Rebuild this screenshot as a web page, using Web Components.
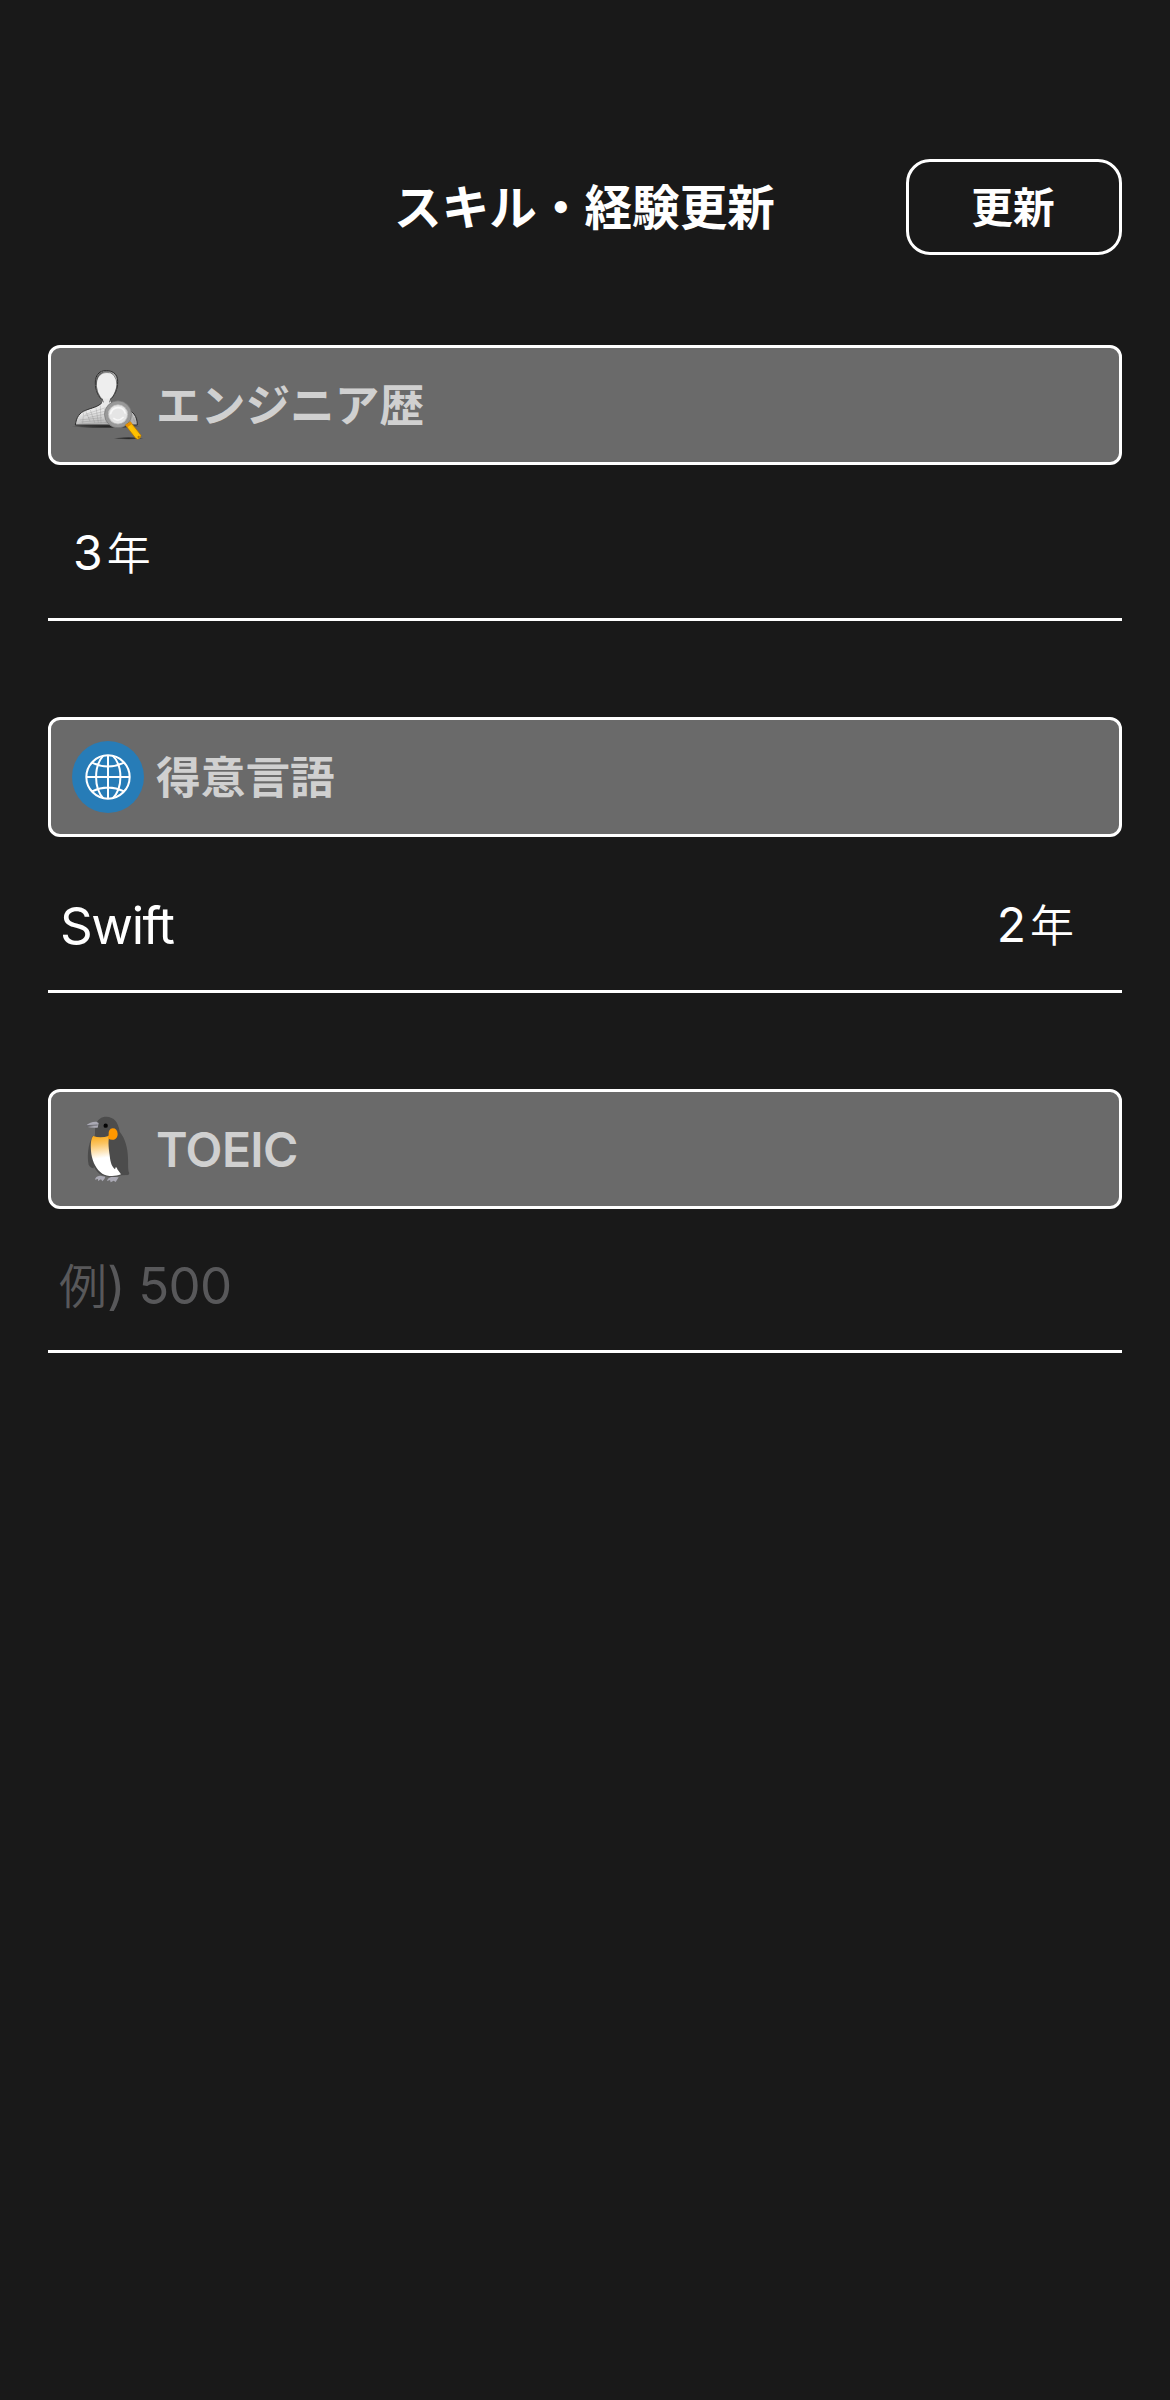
<!DOCTYPE html>
<html lang="ja">
<head>
<meta charset="utf-8">
<title>スキル・経験更新</title>
<style>
html, body { margin: 0; background: #191919; }
body { width: 1170px; height: 2400px; overflow: hidden; font-family: Inter, "Noto Sans CJK JP", sans-serif; color: #fff; }
.jp { font: 350 48px/1 "Noto Sans CJK JP", sans-serif; letter-spacing: 0; margin: 0 0 2px -1px; }
</style>
</head>
<body>
<skill-page>
  <nav-bar slot="nav" heading="スキル・経験更新"><outline-button slot="action">更新</outline-button></nav-bar>
  <skill-section label="エンジニア歴" icon="user">
    <field-row kind="years"><value-text num="3" unit="年"></value-text></field-row>
  </skill-section>
  <skill-section label="得意言語" icon="globe">
    <field-row kind="language"><span>Swift</span><value-text slot="end" num="2" unit="年"></value-text></field-row>
  </skill-section>
  <skill-section label="TOEIC" icon="penguin" latin>
    <field-row kind="score"><span class="jp">例</span><span>) 500</span></field-row>
  </skill-section>
</skill-page>

<script>
const ICONS = {
  user: `<svg viewBox="36 27 216 216">
    <defs><linearGradient id="b" x1="0" y1="0" x2=".35" y2="1"><stop offset="0" stop-color="#f0f0f0"/><stop offset=".5" stop-color="#e5e5e5"/><stop offset="1" stop-color="#b2b2b2"/></linearGradient>
    <linearGradient id="h" x1="0" y1="1" x2="1" y2="0"><stop offset="0" stop-color="#f2a000"/><stop offset=".5" stop-color="#ffc400"/><stop offset="1" stop-color="#e79000"/></linearGradient>
    <radialGradient id="s"><stop offset="0" stop-color="#111" stop-opacity=".8"/><stop offset=".7" stop-color="#1c1c1c" stop-opacity=".5"/><stop offset="1" stop-color="#333" stop-opacity="0"/></radialGradient></defs>
    <ellipse cx="138" cy="199" rx="104" ry="6" fill="url(#s)"/>
    <ellipse cx="206" cy="235" rx="46" ry="4" fill="url(#s)"/>
    <path d="M46 195C49 172 58 158 77 151C95 143 114 142 128 126L151 125C169 139 207 144 222 162C229 171 232 182 232 195Z" fill="url(#b)" stroke="#2c2c2c" stroke-width="3"/>
    <path d="M59 180L126 173M62 186L133 180M58 192L142 187M76 163L137 143M72 168L134 154M84 173L136 162M71 157L68 190M77 153L90 184M91 150L104 188M108 143L115 188M121 137L123 190M134 147L139 190M213 158L225 188M218 162L209 191" stroke="#777" stroke-width="1.5" opacity=".5" fill="none"/>
    <path d="M139 32C119 31 107 44 106 66C105 91 117 119 138 126C159 118 174 91 173 64C173 43 160 32 139 32Z" fill="#a0a0a0" stroke="#2b2b2b" stroke-width="3" stroke-dasharray="15 1"/>
    <path d="M141 39C122 40 112 51 111 70C109 92 119 114 139 125C159 114 170 91 170 67C170 48 160 39 141 39Z" fill="#eee"/>
    <path d="M110 57Q120 30 148 36M108 76Q110 45 128 38M112 94Q101 55 122 37M168 92Q178 54 151 37M119 109L109 90M160 109L171 83" stroke="#505050" stroke-width="2" fill="none"/>
    <path d="M128 116H150L155 132Q140 138 125 132Z" fill="#e8e8e8"/>
    <path d="M126 116L130 127M152 116L149 127" stroke="#555" stroke-width="3" fill="none"/>
    <circle cx="174" cy="163" r="35" fill="#e2e2e2" stroke="#999" stroke-width="11"/>
    <circle cx="174" cy="163" r="40.5" fill="none" stroke="#747474" stroke-width="2"/>
    <circle cx="174" cy="163" r="29" fill="#e5e5e5" stroke="#aaa" stroke-width="2"/>
    <path d="M151 163Q156 143 174 143T196 161M160 174Q174 188 191 171" fill="none" stroke="#f7f7f7" stroke-width="5"/>
    <path d="M196 195L211 185L243 226Q243 236 233 238L227 235Z" fill="url(#h)" stroke="#ad7100" stroke-width="2"/>
    <path d="M197 195L211 186L216 192L202 202Z" fill="#e98d00"/><circle cx="236" cy="231" r="3.5" fill="#b77a00"/>
  </svg>`,
  globe: `<svg viewBox="96 93 216 216"><circle cx="204" cy="201" r="108" fill="#277cb7"/>
    <g fill="none" stroke="#fff" stroke-width="6"><circle cx="204" cy="201" r="65"/>
    <path d="M204 136V266M139 201H269M190 137C161 168 161 234 190 265M218 137C249 168 249 234 218 265M156 158Q204 181 252 158M156 244Q204 221 252 244"/></g></svg>`,
  penguin: `<svg viewBox="6 22 216 216"><defs><linearGradient id="p" gradientUnits="userSpaceOnUse" x1="90" y1="92" x2="98" y2="157"><stop offset="0" stop-color="#fbad22"/><stop offset=".35" stop-color="#fbc564"/><stop offset="1" stop-color="#fff"/></linearGradient></defs>
    <path d="M90 210Q76 212 75 222L84 220L84 226L93 221L97 227Q104 222 106 213ZM126 213Q113 216 111 226L120 223L122 230L131 225L137 229L146 215Z" fill="#aaa9b4"/>
    <path d="M68 92C53 117 51 157 56 177Q61 187 71 188L80 100Z" fill="#4b4b4b"/>
    <path d="M78 57C83 40 94 33 109 33C132 34 145 49 149 78C166 99 173 126 174 158C175 177 173 194 178 203L175 208L154 209C136 216 107 215 89 205C71 191 61 162 61 130C61 112 64 99 72 93C78 89 72 74 78 57Z" fill="#4c4c4c"/>
    <path d="M70 91Q91 99 118 90C113 111 117 132 119 149C121 171 126 184 135 191L137 185Q141 184 142 191L153 206C137 213 111 213 97 204C80 193 68 170 64 145C61 119 62 98 70 91Z" fill="url(#p)"/>
    <path d="M47 60Q62 47 79 48L86 52L83 66Q64 67 53 64L72 61L47 60Z" fill="#aaa9b4"/>
    <path d="M48 60L83 58" stroke="#4d4d50" stroke-width="2"/>
    <circle cx="107" cy="60" r="6.5" fill="#050505"/>
    <path d="M128 68C119 69 115 76 116 86L114 98Q122 104 132 102Q143 98 143 85Q142 68 128 68Z" fill="#ff9800"/>
  </svg>`
};

class Base extends HTMLElement {
  connectedCallback() {
    if (!this.shadowRoot) this.attachShadow({ mode: 'open' }).innerHTML = this.render();
  }
}

customElements.define('skill-page', class extends Base {
  render() {
    return `<style>:host{display:flex;flex-direction:column;box-sizing:border-box;height:2400px;padding:159px 48px 0}
      main{display:flex;flex-direction:column;gap:96px;margin-top:90px}</style>
      <slot name="nav"></slot><main><slot></slot></main>`;
  }
});

customElements.define('nav-bar', class extends Base {
  render() {
    return `<style>:host{display:grid;grid-template-columns:216px 1fr 216px;align-items:center;height:96px}
      h1{grid-column:2;margin:0 1px 4px 0;text-align:center;white-space:nowrap;font:700 47.6px/92px "Noto Sans CJK JP",sans-serif}</style>
      <h1>${this.getAttribute('heading')}</h1><slot name="action"></slot>`;
  }
});

customElements.define('outline-button', class extends Base {
  render() {
    return `<style>:host{display:block}
      button{display:flex;align-items:center;justify-content:center;width:216px;height:96px;padding:0 2px 2px 0;box-sizing:border-box;border:3px solid #fff;border-radius:24px;background:none;color:#fff;font:700 41.7px/1 "Noto Sans CJK JP",sans-serif}</style>
      <button><slot></slot></button>`;
  }
});

customElements.define('app-icon', class extends Base {
  render() {
    return `<style>:host{display:block;width:72px;height:72px}svg{display:block;width:72px;height:72px}</style>${ICONS[this.getAttribute('name')]}`;
  }
});

customElements.define('skill-section', class extends Base {
  render() {
    return `<style>:host{display:block}
      header{display:flex;align-items:center;gap:12px;box-sizing:border-box;height:120px;padding:0 21px;border:3px solid #fff;border-radius:12px;background:#6a6a6a}
      h2{margin:0 0 4px;color:#d0d0d0;white-space:nowrap;font:700 44.7px/72px "Noto Sans CJK JP",sans-serif}
      :host([latin]) h2{margin:2px 0 0;font:600 48px/72px Inter,sans-serif;letter-spacing:-.6px}</style>
      <header><app-icon name="${this.getAttribute('icon')}"></app-icon><h2>${this.getAttribute('label')}</h2></header><slot></slot>`;
  }
});

customElements.define('value-text', class extends Base {
  render() {
    return `<style>:host{display:flex;align-items:baseline;gap:4px;font-size:48px;line-height:60px}
      .u{font:350 44px/1 "Noto Sans CJK JP",sans-serif;margin-bottom:1px}</style>
      <span>${this.getAttribute('num')}</span><span class="u">${this.getAttribute('unit')}</span>`;
  }
});

customElements.define('field-row', class extends Base {
  render() {
    return `<style>:host{display:flex;justify-content:space-between;align-items:flex-start;box-sizing:border-box;height:156px;padding:58px 48px 0 12px;border-bottom:3px solid #fff;font-size:51px;line-height:60px}
      :host([kind="years"]){padding-left:25px}
      :host([kind="language"]) div{line-height:62px;letter-spacing:-1.4px}
      :host([kind="score"]){height:144px;padding-top:47px;color:#58585a;letter-spacing:-.8px}
      div{display:flex;align-items:baseline;white-space:pre}</style>
      <div><slot></slot></div><slot name="end"></slot>`;
  }
});
</script>
</body>
</html>
